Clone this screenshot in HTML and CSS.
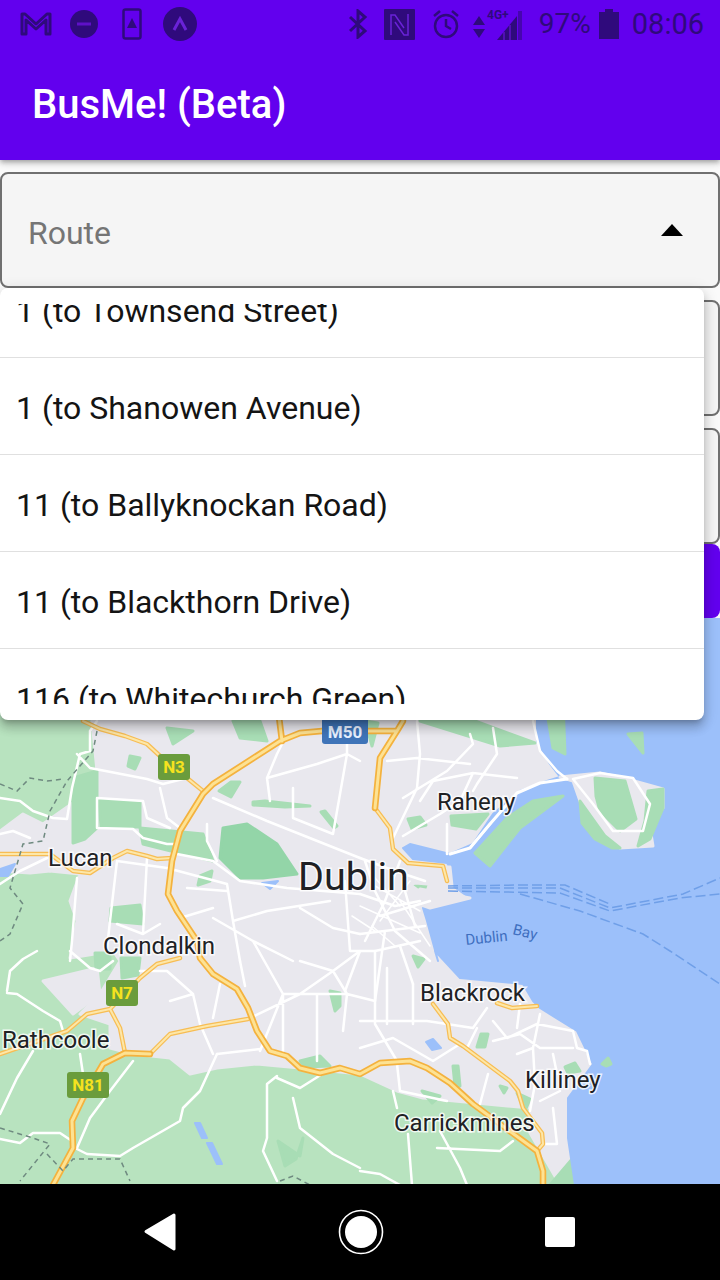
FILE: index.html
```html
<!DOCTYPE html>
<html lang="en">
<head>
    <meta charset="UTF-8">
    <meta name="viewport" content="width=device-width, initial-scale=1.0">
    <title>BusMe! (Beta)</title>
    <link rel="stylesheet" href="styles.css">
</head>
<body>
    <div class="app-bar">
        <div class="status-bar">
            <div class="status-left">
                <svg class="st-icon st-m" width="34" height="28" viewBox="0 0 34 28"><path d="M3 24V4h3l11 10L28 4h3v20h-4V10l-10 9-10-9v14z" fill="none" stroke="#2f0a7c" stroke-width="3" stroke-linejoin="round"/></svg>
                <svg class="st-icon st-minus" width="28" height="28" viewBox="0 0 28 28"><circle cx="14" cy="14" r="14" fill="#2f0a7c"/><rect x="7" y="12.500" width="14" height="3" fill="#5f10c8"/></svg>
                <svg class="st-icon st-phone" width="20" height="32" viewBox="0 0 20 32"><rect x="1.500" y="1.500" width="17" height="29" rx="2" fill="none" stroke="#2f0a7c" stroke-width="2.500"/><path d="M10 10l5 10H5z" fill="#2f0a7c"/></svg>
                <svg class="st-icon st-up" width="34" height="34" viewBox="0 0 34 34"><circle cx="17" cy="17" r="17" fill="#2f0a7c"/><path d="M11 23l6-11 6 11" fill="none" stroke="#6a22d8" stroke-width="3"/></svg>
            </div>
            <div class="status-right">
                <svg class="st-icon bt" width="20" height="30" viewBox="0 0 20 30"><path d="M2 8l15 14-7 6V2l7 6L2 22" fill="none" stroke="#2f0a7c" stroke-width="3"/></svg>
                <svg class="st-icon nfc" width="31" height="31" viewBox="0 0 31 31"><rect width="31" height="31" rx="1" fill="#2f0a7c"/><path d="M7 26V6h4l9 13M24 5v21h-4L11 13" fill="none" stroke="#6a22d8" stroke-width="1.500"/></svg>
                <svg class="st-icon alarm" width="28" height="30" viewBox="0 0 28 30"><circle cx="14" cy="17" r="11" fill="none" stroke="#2f0a7c" stroke-width="2.500"/><path d="M14 10v7l5 3M2 7l6-5M26 7l-6-5" fill="none" stroke="#2f0a7c" stroke-width="2.500"/></svg>
                <svg class="st-icon signal" width="50" height="32" viewBox="0 0 50 32"><path d="M6 8l-6 9h12zM6 30l-6-9h12z" fill="#2f0a7c"/><path d="M24 32l20-24v24z" fill="#2f0a7c"/><rect x="45" y="3" width="4" height="29" fill="#2f0a7c" opacity="0.55"/><path d="M31 32v-8M37 32V17" stroke="#5f10c8" stroke-width="1.500"/><text class="st-4g" x="14" y="11">4G+</text></svg>
                <span class="st-text pct">97%</span>
                <svg class="st-icon batt" width="20" height="30" viewBox="0 0 20 30"><path d="M6 0h8v3h6v27H0V3h6z" fill="#2f0a7c"/></svg>
                <span class="st-text clock">08:06</span>
            </div>
        </div>
        <div class="toolbar">BusMe! (Beta)</div>
    </div>

    <div class="form">
        <div class="field">
            <span class="field-label">Route</span>
            <span class="field-arrow"></span>
        </div>
        <div class="field"></div>
        <div class="field"></div>
        <div class="submit"></div>
    </div>

    <div class="map">
        <svg width="720" height="567" viewBox="0 617 720 567">
            <rect class="m-green" x="0" y="617" width="720" height="567"/>
            <!-- built up areas -->
            <path class="m-urban" d="M90 700L537 700L537 740L550 763L567 777L573 1000L630 1137L612 1184L560 1184L530 1132L530 1107L423 1097L397 1090L360 1073L300 1067L257 1063L217 1067L190 1073L170 1057L133 1053L110 1047L110 1023L80 1013L100 993L120 960L113 950L70 957L77 920L70 900L80 873L50 870L43 823L90 790L97 770Z"/>
            <path class="m-urban" d="M43 980L97 967L100 993L73 1013Z"/>
            <path class="m-urban" d="M0 830L23 813L43 823L50 870L30 872L0 870Z"/>
            <!-- parks -->
            <path class="m-lite" d="M73 777L97 770L97 797L97 827L85 838L73 842Z"/>
            <path class="m-lite" d="M99 799L140 801L140 826L101 826Z"/>
            <path class="m-lite" d="M140 827L203 833L213 860L183 853L143 843Z"/>
            <path class="m-park" d="M223 827L247 823L277 843L297 873L263 877L240 877L220 857Z"/>
            <path class="m-lite" d="M167 727L193 730L173 743Z"/>
            <path class="m-lite" d="M233 720L260 720L267 740L240 737Z"/>
            <path class="m-lite" d="M130 755L140 757L135 768L128 765Z"/>
            <path class="m-lite" d="M231 781L240 781L231 796L219 790Z"/>
            <path class="m-lite" d="M253 801L265 800L310 805L285 806L253 804Z"/>
            <path class="m-lite" d="M321 811L325 810L337 825L334 827Z"/>
            <path class="m-lite" d="M111 907L140 904L143 923L110 920Z"/>
            <path class="m-lite" d="M200 875L212 870L210 880L198 884Z"/>
            <path class="m-lite" d="M95 952L110 952L110 968L96 968ZM121 957L140 957L138 974L122 977Z"/>
            <path class="m-lite" d="M420 720L475 720L535 742L500 745Z"/>
            <path class="m-lite" d="M365 720L378 722L372 745Z"/>
            <path class="m-lite" d="M408 818L420 816L426 824L412 828Z"/>
            <path class="m-lite" d="M451 815L488 813L476 828L452 824Z"/>
            <path class="m-lite" d="M413 882L428 878L424 890Z"/>
            <path class="m-lite" d="M413 955L424 958L418 966Z"/>
            <path class="m-lite" d="M481 1033L488 1033L485 1046L477 1046Z"/>
            <path class="m-lite" d="M453 1065L458 1065L460 1085L455 1085Z"/>
            <path class="m-lite" d="M565 1066L575 1062L580 1070L568 1072Z"/>
            <path class="m-lite" d="M500 1085L507 1087L504 1092Z"/>
            <path class="m-lite" d="M517 1092L525 1110L530 1098Z"/>
            <path class="m-lite" d="M422 1090L440 1095L432 1102Z"/>
            <path class="m-lite" d="M330 990L340 992L340 1005L335 1010Z"/>
            <path class="m-lite" d="M300 1060L320 1055L330 1065L305 1066Z"/>
            <path class="m-lite" d="M278 1140L300 1155L303 1137L296 1158L285 1165Z"/>
            <path class="m-lite" d="M550 1184L573 1157L575 1184Z"/>
            <!-- sea -->
            <path class="m-water" d="M537 617L720 617L720 1184L575 1184L568 1137L568 1097L593 1063L577 1030L540 1007L533 1000L523 983L460 977L435 950L438 960L427 920L423 907L470 897L450 883L453 872L447 862L413 858L403 847L410 843L450 853L473 843L493 813L520 790L547 780L560 776L550 763L537 740Z"/>
            <path class="m-land" d="M560 776L600 772L627 778L663 788L663 807L650 827L653 845L620 847L603 837L587 820L580 800L573 780Z"/>
            <path class="m-lite" d="M595 777L625 780L636 818L620 830L600 810L596 795Z"/>
            <path class="m-lite" d="M648 790L663 788L663 807L650 838L638 845L645 820Z"/>
            <path class="m-lite" d="M580 800L605 835L620 847L612 847L595 838L582 822Z"/>
            <path class="m-lite" d="M475 852L490 865L520 827L563 795L533 800L507 817Z"/>
            <path class="m-lite" d="M628 733L642 732L643 752Z"/>
            <path class="m-lite" d="M545 700L563 700L565 753L553 747Z"/>
            <path class="m-lite" d="M602 1063L608 1057L611 1063L606 1065Z"/>
            <path class="m-land" d="M400 866L450 866L452 885L415 882L400 890Z"/>
            <path class="m-land" d="M420 888L470 897L430 907L410 900Z"/>
            <path class="m-water" d="M426 1041L433 1038L441 1047L432 1049Z"/>
            <path class="m-water" d="M195 1122L200 1122L207 1137L202 1137ZM207 1142L212 1142L222 1163L217 1163Z"/>
            <path class="m-water" d="M0 868L15 863L8 875L0 875Z"/>
            <path class="m-water" d="M262 882L278 880L270 888Z"/>
            <!-- minor roads, west -->
            <path class="m-road" d="M0 797L20 800L33 810L53 817L67 818L72 787L80 753L90 750L90 730L97 720M77 753L90 767L147 778L163 783L187 777M97 797L97 827L133 828L143 837L167 843L177 843M97 797L143 800L147 817L170 827M160 787L167 817L180 827M0 833L13 830L30 837M0 883L20 870L47 857"/>
            <path class="m-road" d="M117 860L110 920L107 947M147 857L143 933M77 877L72 940L70 960M117 860L167 867L227 883L233 920L240 960M177 853L213 860L240 880L287 887L360 893M187 887L227 890M207 823L207 840L217 860M213 797L267 820L360 857M267 777L270 800M267 777L277 753L282 743M293 787L293 817L333 833L347 753L347 720M317 763L267 777M317 763L347 753L360 760M213 917L253 940L293 960M300 907L333 927L360 933M233 920L267 910L330 900M117 923L143 933L160 923M180 917L213 907"/>
            <!-- minor roads, south west -->
            <path class="m-road" d="M7 990L10 970L23 958L37 950M7 992L17 993L43 1010L60 1020L63 1030M70 950L90 967L100 970L113 960M33 1050L17 1077L0 1113M80 1053L83 1073M133 1060L110 1090L90 1117L77 1147M217 1053L200 1090L183 1107L180 1120L133 1147L120 1155L87 1153L75 1147M0 1138L20 1142L33 1132L60 1132L72 1140M277 1075L267 1083L267 1137L263 1150L277 1180M293 1097L300 1127L333 1153L360 1167M277 1077L300 1087L327 1070"/>
            <path class="m-road" d="M170 1000L193 993L200 1023L213 1053M140 970L167 970L193 993M213 1017L220 983M250 1017L300 993L333 970L360 950M217 1053L260 1048M260 1050L283 993L283 1050M317 1060L317 993M343 1030L347 993L333 970M240 960L245 985M283 993L317 993L347 993L375 1000M300 960L333 970M253 940L283 993"/>
            <!-- minor roads, north east and centre -->
            <path class="m-road" d="M417 720L420 753L417 787L393 837M470 733L473 743L447 770L403 797M387 760L417 757L470 763M433 780L473 772L517 777M493 727L497 753L477 783L473 790M533 720L540 750L557 770L567 778M403 835L440 813L460 800M447 823L447 853M490 823L470 847M433 780L420 800M473 772L460 800"/>
            <path class="m-coast" d="M517 792L540 782L567 778M450 853L470 847L490 823L517 792"/>
            <path class="m-road" d="M573 778L593 803L613 830L643 830L650 803L633 777L600 772L573 778"/>
            <path class="m-road" d="M360 857L395 870L425 880M360 893L395 905L420 900M365 860L375 890L395 930L430 960M400 860L385 900L365 940M360 933L425 925M345 880L350 950L375 950L420 940M380 915L430 900M405 890L415 925M385 930L375 1000M400 945L413 983M360 950L345 990"/>
            <path class="m-thin" d="M367 868L400 905M375 885L420 910M410 880L380 920M360 905L420 932M400 900L430 945M372 925L395 945M352 915L375 930"/>
            <!-- minor roads, south east -->
            <path class="m-road" d="M360 1020L427 1020L473 1027L487 1007M375 950L375 1023L397 1060M387 967L387 1023M413 983L413 1023M360 1047L393 1037L433 1060L460 1043M477 1027L467 1047M493 1020L507 1037L537 1023L573 1030L577 1047L587 1050L590 1063M493 1040L520 1033L540 1047L573 1047M517 1053L533 1047L535 1083L530 1110M553 1053L557 1073M488 1073L480 1103M520 1003L517 1027M540 1013L533 1047M560 1090L540 1100M553 1107L557 1143L543 1143M397 1063L400 1090L447 1100M393 1090L397 1107M408 1133L412 1184M440 1130L460 1167L467 1184M437 1147L500 1150L513 1140M360 1170L380 1173L400 1184"/>
            <!-- motorways -->
            <path class="m-minor-c" d="M0 853L50 853L73 870L90 872L113 857L127 850L147 855L157 858L172 857M497 1002L512 1007L537 1005M433 1003L448 1023L450 1037L463 1045L510 1080L518 1090L523 1107L542 1132L543 1143L537 1150M180 957L157 963L140 977L110 1008L87 1013L67 1030L0 1053M110 1008L120 1027L125 1052M150 1053L170 1033L207 1025L248 1018M83 720L100 728L125 735L147 743L160 755L187 777L203 790M375 807L390 827L393 848L408 862L443 865L447 880"/>
            <path class="m-minor-f" d="M0 853L50 853L73 870L90 872L113 857L127 850L147 855L157 858L172 857M497 1002L512 1007L537 1005M433 1003L448 1023L450 1037L463 1045L510 1080L518 1090L523 1107L542 1132L543 1143L537 1150M180 957L157 963L140 977L110 1008L87 1013L67 1030L0 1053M110 1008L120 1027L125 1052M150 1053L170 1033L207 1025L248 1018M83 720L100 728L125 735L147 743L160 755L187 777L203 790M375 807L390 827L393 848L408 862L443 865L447 880"/>
            <path class="m-major-c" d="M322 730L300 732L280 740L213 783L203 793L180 830L172 860L168 893L177 910L197 940L200 957L213 973L237 988L248 1007L257 1030L270 1050L287 1055L300 1067L320 1072L340 1067L360 1073L380 1062L410 1060L427 1067L450 1082L473 1103L500 1123L537 1150L543 1170L543 1184M277 700L282 740M400 700L403 720L397 730L322 730M397 730L380 757L375 807M150 1053L125 1052L103 1063L83 1097L72 1120L73 1147L53 1184"/>
            <path class="m-major-f" d="M322 730L300 732L280 740L213 783L203 793L180 830L172 860L168 893L177 910L197 940L200 957L213 973L237 988L248 1007L257 1030L270 1050L287 1055L300 1067L320 1072L340 1067L360 1073L380 1062L410 1060L427 1067L450 1082L473 1103L500 1123L537 1150L543 1170L543 1184M277 700L282 740M400 700L403 720L397 730L322 730M397 730L380 757L375 807M150 1053L125 1052L103 1063L83 1097L72 1120L73 1147L53 1184"/>
            <!-- trails and ferries -->
            <path class="m-trail" d="M97 730L93 750L67 780L50 810L43 840L23 843L10 887L23 903L10 933L0 940M0 783L17 790L30 777L47 780L63 778M0 1127L33 1137L50 1143L20 1180M47 1153L63 1170L73 1158L120 1158L130 1180M280 1180L293 1175L310 1184"/>
            <path class="m-ferry" d="M448 887L560 887L610 907L683 893L720 877M448 890L560 892L610 910L680 897L720 893M448 885L520 884L565 884L612 904M520 893L580 910L643 933L670 950L720 983"/>
            <!-- labels -->
            <text class="m-label" x="48" y="865">Lucan</text>
            <text class="m-label" x="103" y="953">Clondalkin</text>
            <text class="m-label" x="437" y="809">Raheny</text>
            <text class="m-label" x="420" y="1000">Blackrock</text>
            <text class="m-label" x="2" y="1047">Rathcoole</text>
            <text class="m-label" x="525" y="1087">Killiney</text>
            <text class="m-label" x="394" y="1130">Carrickmines</text>
            <text class="m-label m-city" x="298" y="889">Dublin</text>
            <text class="m-bay" transform="translate(466 944) rotate(-6)">Dublin</text>
            <text class="m-bay" transform="translate(512 933) rotate(14)">Bay</text>
            <!-- shields -->
            <rect class="m-shield-m" x="322" y="715" width="46" height="28" rx="3"/>
            <text class="m-shield-text white" x="345" y="737">M50</text>
            <rect class="m-shield-n" x="158" y="753" width="32" height="26" rx="3"/>
            <text class="m-shield-text" x="174" y="772">N3</text>
            <rect class="m-shield-n" x="106" y="979" width="32" height="26" rx="3"/>
            <text class="m-shield-text" x="122" y="998">N7</text>
            <rect class="m-shield-n" x="67" y="1071" width="42" height="26" rx="3"/>
            <text class="m-shield-text" x="88" y="1090">N81</text>
        </svg>
    </div>

    <div class="nav-bar">
        <svg width="34" height="40" viewBox="0 0 34 40"><path d="M31 3L3 19.500 31 37z" fill="#fff" stroke="#fff" stroke-width="3" stroke-linejoin="round"/></svg>
        <svg width="46" height="46" viewBox="0 0 46 46"><circle cx="23" cy="23" r="21.500" fill="none" stroke="#fff" stroke-width="1.600"/><circle cx="23" cy="23" r="16" fill="#fff"/></svg>
        <div class="nav-square"></div>
    </div>

    <div class="menu">
        <div class="menu-scroll">
            <div class="menu-item first">1 (to Townsend Street)</div>
            <div class="menu-item">1 (to Shanowen Avenue)</div>
            <div class="menu-item">11 (to Ballyknockan Road)</div>
            <div class="menu-item">11 (to Blackthorn Drive)</div>
            <div class="menu-item">116 (to Whitechurch Green)</div>
        </div>
    </div>
</body>
</html>
```

FILE: styles.css
```css
body {
    margin: 0;
    width: 720px;
    height: 1280px;
    overflow: hidden;
    display: flex;
    flex-direction: column;
    position: relative;
    background: #fafafa;
    font-family: Roboto, "Liberation Sans", sans-serif;
}
.app-bar {
    height: 160px;
    flex: none;
    background: #6200ee;
    color: white;
    box-shadow: 0 2px 4px -1px rgba(0, 0, 0, 0.2), 0 4px 5px rgba(0, 0, 0, 0.14), 0 1px 10px rgba(0, 0, 0, 0.12);
    position: relative;
    z-index: 2;
}
.status-bar {
    height: 48px;
    display: flex;
    justify-content: space-between;
    align-items: center;
    padding: 0 16px 0 19px;
}
.status-left, .status-right {
    display: flex;
    align-items: center;
}
.st-icon {
    display: block;
    flex: none;
}
.st-minus { margin-left: 17px; }
.st-phone { margin-left: 24px; }
.st-up { margin-left: 21px; }
.bt { margin-right: 16px; }
.nfc { margin-right: 17px; }
.alarm { margin-right: 13px; }
.signal { margin-right: 16px; }
.batt { margin: 0 13px 0 8px; }
.st-text {
    color: #2f0a7c;
    font-size: 28px;
    line-height: 48px;
}
.clock {
    font-size: 29px;
}
.st-4g {
    fill: #2f0a7c;
    font-size: 12px;
    font-weight: 700;
}
.toolbar {
    height: 112px;
    line-height: 114px;
    padding-left: 32px;
    font-size: 40px;
    font-weight: 500;
}
.form {
    flex: none;
    padding-top: 12px;
    display: flex;
    flex-direction: column;
}
.field {
    height: 116px;
    box-sizing: border-box;
    margin-bottom: 12px;
    background: #f5f5f5;
    border: 2px solid #707070;
    border-radius: 8px;
    display: flex;
    align-items: center;
    justify-content: space-between;
    padding: 6px 35px 0 26px;
}
.field-label {
    color: #757575;
    font-size: 32px;
}
.field-arrow {
    width: 0;
    height: 0;
    border-left: 11px solid transparent;
    border-right: 11px solid transparent;
    border-bottom: 12px solid black;
    margin-top: -6px;
}
.submit {
    height: 74px;
    margin-top: -12px;
    background: #6200ee;
    border-radius: 8px;
}
.map {
    flex: 1;
    overflow: hidden;
}
.map svg {
    display: block;
}
.nav-bar {
    height: 96px;
    flex: none;
    background: black;
    display: flex;
    align-items: center;
    justify-content: space-between;
    padding: 0 145px 0 143px;
}
.nav-square {
    width: 30px;
    height: 30px;
    background: white;
    border-radius: 2px;
}
.menu {
    position: absolute;
    left: 0;
    top: 288px;
    width: 704px;
    height: 432px;
    box-sizing: border-box;
    padding: 16px 0;
    background: white;
    border-radius: 8px;
    z-index: 3;
    box-shadow: 0 5px 5px -3px rgba(0, 0, 0, 0.2), 0 8px 10px 1px rgba(0, 0, 0, 0.14), 0 3px 14px 2px rgba(0, 0, 0, 0.12);
}
.menu-scroll {
    height: 400px;
    overflow: hidden;
}
.menu-item {
    height: 97px;
    box-sizing: border-box;
    line-height: 101px;
    padding-left: 16px;
    font-size: 32px;
    color: #141414;
    border-bottom: 1px solid #e0e0e0;
}
.menu-item.first {
    margin-top: -43px;
}

/* map layers */
.m-green { fill: #b8e3bf; }
.m-urban, .m-land {
    fill: #e9e8ee;
    stroke: #e9e8ee;
    stroke-width: 3;
    stroke-linejoin: round;
}
.m-park, .m-lite {
    stroke-width: 3;
    stroke-linejoin: round;
}
.m-park { fill: #93d5a8; stroke: #93d5a8; }
.m-lite { fill: #a8ddb5; stroke: #a8ddb5; }
.m-water {
    fill: #9cc0fa;
    stroke: #9cc0fa;
    stroke-width: 2;
    stroke-linejoin: round;
}
.m-road, .m-thin, .m-coast {
    fill: none;
    stroke: white;
    stroke-width: 2.5;
    stroke-linejoin: round;
    stroke-linecap: round;
}
.m-thin {
    stroke-width: 1.5;
}
.m-coast {
    stroke-width: 3;
}
.m-major-c, .m-major-f, .m-minor-c, .m-minor-f {
    fill: none;
    stroke-linejoin: round;
    stroke-linecap: round;
}
.m-major-c {
    stroke: #f4b23e;
    stroke-width: 6.5;
}
.m-major-f {
    stroke: #fde293;
    stroke-width: 3;
}
.m-minor-c {
    stroke: #f7bd54;
    stroke-width: 4.5;
}
.m-minor-f {
    stroke: #fde7a8;
    stroke-width: 2;
}
.m-trail {
    fill: none;
    stroke: #6f8a80;
    stroke-width: 1.5;
    stroke-dasharray: 5 4;
}
.m-ferry {
    fill: none;
    stroke: #6f9fe8;
    stroke-width: 1.5;
    stroke-dasharray: 10 4;
}
.m-label {
    font-size: 24px;
    fill: #202124;
    stroke: rgba(255, 255, 255, 0.8);
    stroke-width: 3px;
    paint-order: stroke;
}
.m-city {
    font-size: 39.5px;
}
.m-bay {
    font-size: 15px;
    fill: #3f6fc0;
}
.m-shield-m { fill: #3f74b8; }
.m-shield-n { fill: #6a9c3c; }
.m-shield-text {
    font-size: 17px;
    font-weight: 700;
    text-anchor: middle;
    fill: #f5e21f;
}
.m-shield-text.white {
    fill: #e8f0fe;
}
```
